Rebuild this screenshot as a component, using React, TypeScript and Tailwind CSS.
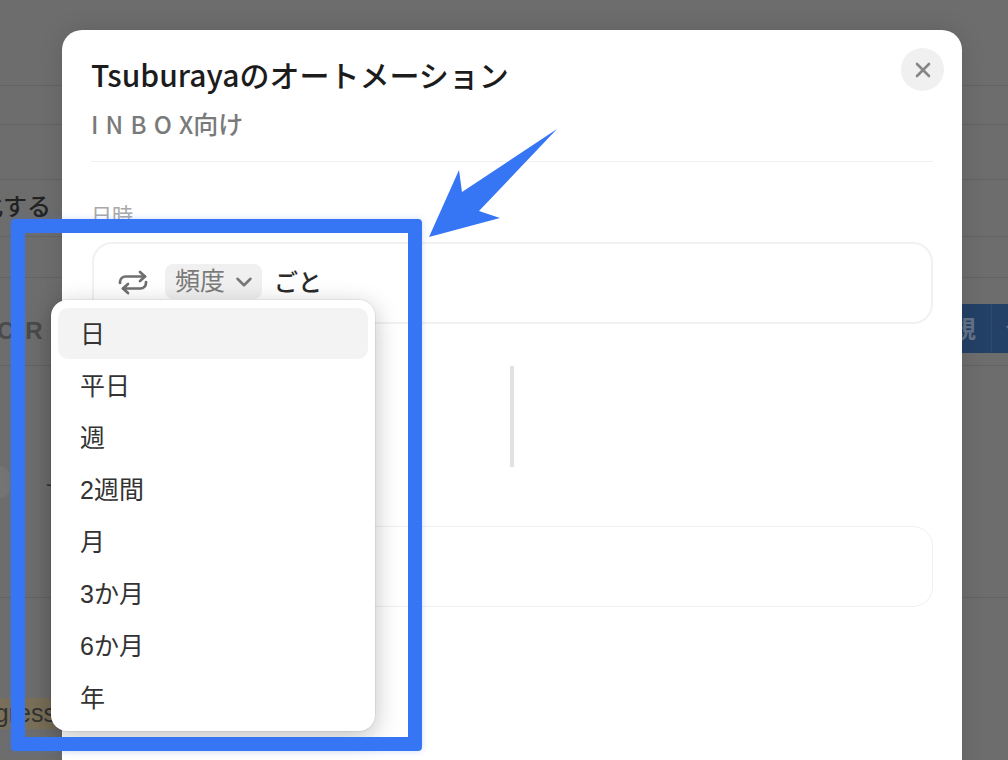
import { ChevronDown, X } from "lucide-react";

const items = ["日", "平日", "週", "2週間", "月", "3か月", "6か月", "年"];
const font = { fontFamily: '"Liberation Sans","Noto Sans CJK JP",sans-serif' };

export default function App() {
  return (
    <div className="relative h-[760px] w-[1008px] overflow-hidden bg-[#6d6d6d] text-[#1f1f1f]" style={font}>
      {/* dimmed page behind the modal */}
      <div className="flex flex-col text-[#222]">
        <div className="h-[86px] border-b border-[#636363]" />
        <div className="h-[39px] border-b border-[#636363]" />
        <div className="h-[55px] border-b border-[#636363]" />
        <div className="flex h-[57px] items-center border-b border-[#636363]">
          <div className="flex w-[51px] justify-end overflow-hidden whitespace-nowrap text-[24px] font-medium leading-none">
            <span className="shrink-0 -translate-y-[1px]">化する</span>
          </div>
        </div>
        <div className="h-[41px] border-b border-[#636363]" />
        <div className="flex h-[88px] items-start justify-between border-b border-[#636363] pt-[26px]">
          <div className="-ml-[3px] flex gap-[11px] pt-[13px] text-[24px] font-bold leading-[28px] text-[#4a4a4a]">
            <span>C</span>
            <span>R</span>
          </div>
          <div className="flex h-[49px] w-[46px] items-center overflow-hidden whitespace-nowrap bg-[#234066] text-[24px] font-bold text-[#647389]">
            <span className="-ml-[34px] shrink-0 pt-[3px]">新規</span>
            <div className="ml-[15px] h-full w-px shrink-0 bg-[#2c4a72]" />
            <ChevronDown className="ml-[10px] h-5 w-5 shrink-0" />
          </div>
        </div>
        <div className="flex h-[232px] items-start gap-[36px] border-b border-[#636363] pt-[100px]">
          <div className="h-[32px] w-[10px] rounded-r-full bg-[#747474]" />
          <span className="text-[20px] leading-[36px] text-[#333]">-</span>
        </div>
        <div className="pt-[100px]">
          <div className="flex h-[31px] w-[62px] items-center justify-end overflow-hidden whitespace-nowrap bg-[#7a6f58] pr-[6px] text-[25px] text-[#333]">
            <span className="shrink-0">Progress</span>
          </div>
        </div>
      </div>

      {/* modal */}
      <div className="absolute left-[62px] top-[30px] h-[780px] w-[900px] rounded-[20px] bg-white px-[29px] shadow-[0_0_24px_rgba(0,0,0,0.12)]">
        <h1 className="whitespace-nowrap pt-[25px] font-['Noto_Sans_CJK_JP'] text-[30px] font-medium leading-[38px] text-[#1c1c1c]">Tsuburayaのオートメーション</h1>
        <p className="mt-[14px] whitespace-nowrap font-['Noto_Sans_CJK_JP'] text-[24px] font-medium leading-[32px] text-[#7a7a7a]">
          <span className="tracking-[0.3em]">INBO</span>
          <span>X</span>
          <span className="text-[25px]">向け</span>
        </p>
        <div className="mt-[21px] h-px w-[842px] bg-[#efefef]" />
        <p className="mt-[40px] text-[21px] leading-[28px] text-[#a8a8a8]">日時</p>
        <div className="ml-px mt-[12px] flex h-[82px] w-[841px] items-start rounded-[20px] border-2 border-[#f1f1f1] pl-[24px] pt-[20px]">
          <svg className="mt-[5px] shrink-0 text-[#6f6f6f]" width="30" height="28" viewBox="0 0 30 28" fill="none" stroke="currentColor" strokeWidth="2.7" strokeLinecap="round" strokeLinejoin="round">
            <path d="M2 14v-1a5.5 5.5 0 0 1 5.5-5.5H27" />
            <path d="M22 3l5 4.5-5 4.5" />
            <path d="M28 13v1a5.5 5.5 0 0 1-5.5 5.5H5" />
            <path d="M10 15l-5 4.5 5 4.5" />
          </svg>
          <div className="ml-[17px] flex h-[35px] w-[97px] items-center rounded-[8px] bg-[#f0f0f0] pl-[10px] text-[25px] text-[#7a7a7a]">
            <span className="shrink-0">頻度</span>
            <ChevronDown className="ml-[6px] h-[26px] w-[26px] shrink-0 text-[#777]" strokeWidth={2.3} />
          </div>
          <span className="ml-[12px] pt-[1px] text-[24px] font-medium leading-[35px] text-[#2a2a2a]">ごと</span>
        </div>
        <div className="ml-[419px] mt-[42px] h-[101px] w-1 bg-[#e3e2e0]" />
        <div className="ml-px mt-[59px] h-[81px] w-[841px] rounded-[20px] border border-[#efeff1]" />
      </div>

      {/* menu */}
      <div className="absolute left-[51px] top-[300px] flex h-[431px] w-[324px] flex-col rounded-[16px] bg-white px-[7px] pt-[8px] shadow-[0_0_0_1px_rgba(0,0,0,0.05),0_6px_24px_rgba(0,0,0,0.25)]">
        {items.map((t, i) => (
          <div
            key={t}
            className={`mb-px flex h-[51px] shrink-0 items-center rounded-[10px] pl-[22px] pt-px text-[25px] leading-none text-[#333] ${i === 0 ? "bg-[#f3f3f3]" : ""}`}
          >
            {t}
          </div>
        ))}
      </div>

      {/* close button */}
      <button className="absolute left-[901px] top-[48px] flex h-[43px] w-[43px] items-center justify-center rounded-full bg-[#f0f0f0] text-[#858585]">
        <X className="h-[24px] w-[24px]" strokeWidth={2.6} />
      </button>

      {/* annotations */}
      <div className="absolute left-[11px] top-[219px] h-[532px] w-[411px] rounded-[4px] border-[14px] border-[#3676f5] shadow-[0_0_6px_rgba(54,118,245,0.25)]" />
      <svg className="absolute left-0 top-0" width="1008" height="760" viewBox="0 0 1008 760" fill="none">
        <polygon points="429,237 459,170 462,192 557,129 479,211 500,218" fill="#3676f5" />
      </svg>
    </div>
  );
}
